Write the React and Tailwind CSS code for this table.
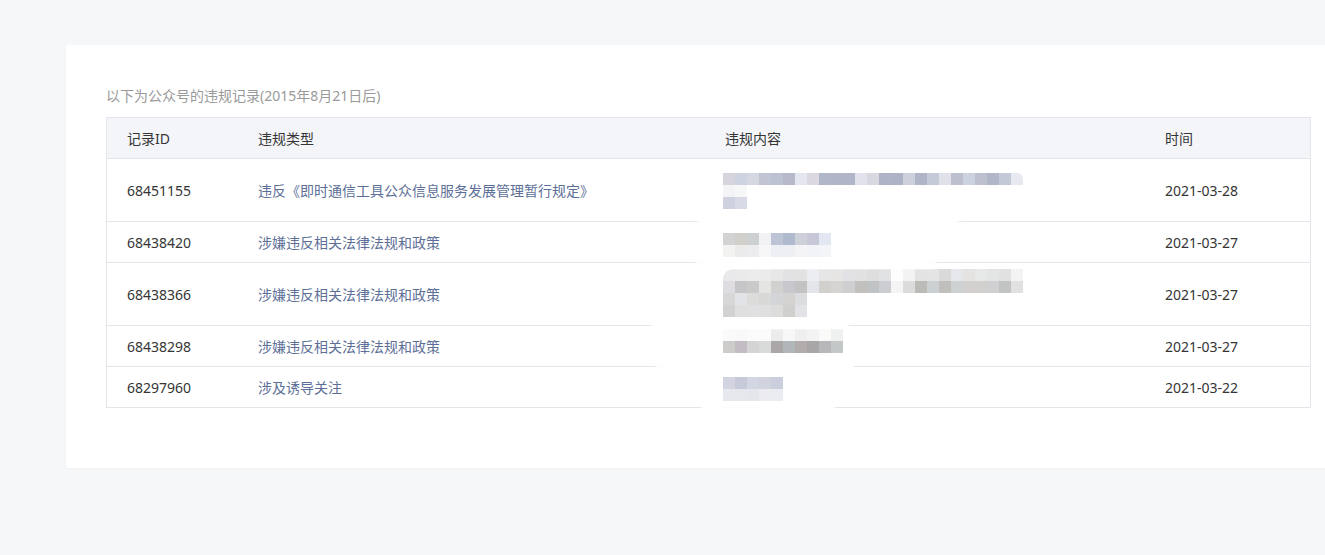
import React from "react";

const rows = [
  {
    id: "68451155",
    type: "违反《即时通信工具公众信息服务发展管理暂行规定》",
    date: "2021-03-28",
    h: "h-[63px]",
    mt: "mt-[14px]",
    lines: [
      ["bg-[#d6d4dc]", "bg-[#cdd3df]", "bg-[#d6d8e1]", "bg-[#c0c4d3]", "bg-[#bdc2d3]", "bg-[#b5b9c9]", "bg-[#e4e7ef]", "bg-[#dbd8e1]", "bg-[#b1b6c9]", "bg-[#b1b5c8]", "bg-[#b0b5c8]", "bg-[#e1e2eb]", "bg-[#d8d8e1]", "bg-[#aeb3c7]", "bg-[#adb2c6]", "bg-[#ccd1dc]", "bg-[#b1b5c8]", "bg-[#c4cad8]", "bg-[#e1e2e9]", "bg-[#bdbfcf]", "bg-[#ccd2de]", "bg-[#bdc0cf]", "bg-[#b1b6c9]", "bg-[#c4c9d7]", "bg-[#e6e9f0] rounded-tr-[6px]"],
      ["bg-[#f4f4f6]", "bg-[#f6f7f9]"],
      ["bg-[#cfd2de]", "bg-[#d8dbe6]"],
    ],
  },
  {
    id: "68438420",
    type: "涉嫌违反相关法律法规和政策",
    date: "2021-03-27",
    h: "h-[41px]",
    mt: "mt-[11px]",
    lines: [
      ["bg-[#d3d3d3]", "bg-[#d1d0cb]", "bg-[#ccd0d3]", "bg-[#f2f2f4]", "bg-[#bcc4d5]", "bg-[#b0bacf]", "bg-[#cdcfd9]", "bg-[#c6c8d7]", "bg-[#e3e7f1]"],
      ["bg-[#f3f3f2]", "bg-[#ebebeb]", "bg-[#ececef]", "bg-[#f7f7f7]", "bg-[#eeeff4]", "bg-[#eeeff3]", "bg-[#f4f4f6]", "bg-[#f2f3f6]", "bg-[#f4f5f8]"],
    ],
  },
  {
    id: "68438366",
    type: "涉嫌违反相关法律法规和政策",
    date: "2021-03-27",
    h: "h-[63px]",
    mt: "mt-[6px]",
    lines: [
      ["bg-[#e9e9eb] rounded-tl-[10px]", "bg-[#eaeaeb]", "bg-[#ececed]", "bg-[#ebebec]", "bg-[#e7e7e8]", "bg-[#e2e2e4]", "bg-[#e2e2e3]", "bg-[#ecedf1]", "bg-[#e6e6e6]", "bg-[#e6e5e3]", "bg-[#e2e2e6]", "bg-[#e1e1e2]", "bg-[#dedede]", "bg-[#e1e2e4]", "bg-[#fdfdfd]", "bg-[#f3f3f3]", "bg-[#e3e3e3]", "bg-[#e4e4e4]", "bg-[#dadada]", "bg-[#e6e7ea]", "bg-[#e4e3e2]", "bg-[#e6e7e7]", "bg-[#e3e4e4]", "bg-[#e1e1e2]", "bg-[#f3f3f3]"],
      ["bg-[#dfdde2]", "bg-[#c6c6c8]", "bg-[#cacacb]", "bg-[#e5e5e1]", "bg-[#d1d1d0]", "bg-[#c8c7cd]", "bg-[#c3c3c4]", "bg-[#e3e5eb]", "bg-[#d2d0cd]", "bg-[#d5d4d2]", "bg-[#cfcfd1]", "bg-[#c1c0bd]", "bg-[#bfc3c5]", "bg-[#cbcdd0]", "bg-[#f4f4f4]", "bg-[#dcdcdc]", "bg-[#bdbbb8]", "bg-[#cbd0d2]", "bg-[#c1bfbb]", "bg-[#cdd1d1]", "bg-[#d3d0cf]", "bg-[#d2d0cf]", "bg-[#d0d0d2]", "bg-[#c1c4c3]", "bg-[#e1e1e1]"],
      ["bg-[#d7d7d7]", "bg-[#e2e3e6]", "bg-[#dcdcdb]", "bg-[#d8d8d7]", "bg-[#d4d5d8]", "bg-[#d5d3d2]", "bg-[#dcdddf]"],
      ["bg-[#d2d2d2]", "bg-[#dfdfe0]", "bg-[#e0e0e2]", "bg-[#dfdfdf]", "bg-[#dcdcdb]", "bg-[#d0d0cf]", "bg-[#e2e3e6]"],
    ],
  },
  {
    id: "68438298",
    type: "涉嫌违反相关法律法规和政策",
    date: "2021-03-27",
    h: "h-[41px]",
    mt: "mt-[3px]",
    lines: [
      ["bg-[#fafafa]", "bg-[#f9f9f9]", "bg-[#fbfbfb]", "bg-[#fbfbfb]", "bg-[#ececec]", "bg-[#f7f7f7]", "bg-[#efefef]", "bg-[#f3f3f3]", "bg-[#fafaf8]", "bg-[#eff0f0]"],
      ["bg-[#cdcccb]", "bg-[#c1bdc2]", "bg-[#d4d4d4]", "bg-[#d9dbdb]", "bg-[#aba6a7]", "bg-[#b1b6b8]", "bg-[#b0adac]", "bg-[#a8a6a6]", "bg-[#b7b6b9]", "bg-[#c4c7c8]"],
    ],
  },
  {
    id: "68297960",
    type: "涉及诱导关注",
    date: "2021-03-22",
    h: "h-[41px]",
    mt: "mt-[10px]",
    lines: [
      ["bg-[#d2d5e1]", "bg-[#c7cad8]", "bg-[#d3d6e3]", "bg-[#d1d3df]", "bg-[#cbcedc]"],
      ["bg-[#e7e8ee]", "bg-[#e6e7ed]", "bg-[#e5e6ec]", "bg-[#ebebf0]", "bg-[#ebecf1]"],
    ],
  },
];

const Mosaic = ({ lines, mt }) => (
  <div className={`flex flex-col self-start ${mt}`}>
    {lines.map((line, i) => (
      <div key={i} className="flex h-3">
        {line.map((c, j) => (
          <div key={j} className={`h-3 w-3 ${c}`} />
        ))}
      </div>
    ))}
  </div>
);

export default function App() {
  return (
    <div className="h-[555px] w-full overflow-hidden bg-[#f6f7f9] font-['Noto_Sans','Noto_Sans_CJK_SC',sans-serif] text-[14px]">
      <div className="ml-[66px] mt-[45px] w-[1284px] rounded-[3px] bg-white px-[40px] pt-[41px] pb-[60px] shadow-[0_1px_2px_rgba(0,0,0,0.03)]">
        {/* caption */}
        <p className="mb-[11px] leading-[20px] text-[#9a9a9a]">以下为公众号的违规记录(2015年8月21日后)</p>

        {/* table */}
        <div className="relative w-[1205px] border-x border-t border-[#e4e6eb] text-[#353535]">
          <div className="flex h-[41px] items-center border-b border-[#e4e6eb] bg-[#f4f5f9]">
            <div className="w-[131px] pl-[20px]">记录ID</div>
            <div className="w-[465px] pl-[20px]">违规类型</div>
            <div className="w-[442px] pl-[22px]">违规内容</div>
            <div className="flex-1 pl-[20px]">时间</div>
          </div>

          {rows.map((r) => (
            <div key={r.id} className={`flex items-center border-b border-[#e4e6eb] ${r.h}`}>
              <div className="w-[131px] pl-[20px]">{r.id}</div>
              <div className="w-[465px] pl-[20px] text-[#5d6f97]">{r.type}</div>
              <div className="flex h-full w-[442px] pl-[20px]">
                <Mosaic lines={r.lines} mt={r.mt} />
              </div>
              <div className="flex-1 pl-[20px]">{r.date}</div>
            </div>
          ))}

          {/* smudges left over from the blurred column */}
          <div className="absolute left-[590px] top-[99px] h-[11px] w-[262px] rounded-full bg-white/90 blur-[1px]" />
          <div className="absolute left-[589px] top-[141px] h-[10px] w-[240px] rounded-full bg-white/90 blur-[1px]" />
          <div className="absolute left-[544px] top-[203px] h-[8px] w-[198px] rounded-full bg-white/90 blur-[1px]" />
          <div className="absolute left-[549px] top-[245px] h-[8px] w-[198px] rounded-full bg-white/90 blur-[1px]" />
          <div className="absolute left-[594px] top-[287px] h-[7px] w-[134px] rounded-full bg-white/90 blur-[1px]" />
        </div>
      </div>
    </div>
  );
}
